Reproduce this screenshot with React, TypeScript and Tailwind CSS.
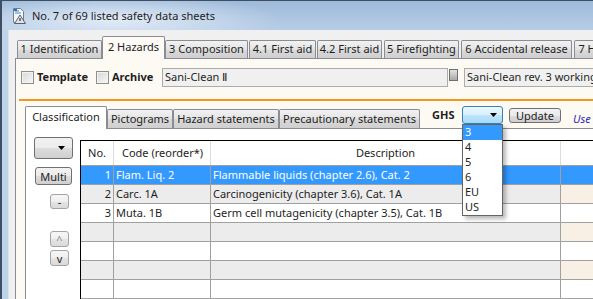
import React from "react";

const outerTabs = [
  { label: "1 Identification", w: "w-[85px]", ml: "" },
  { label: "2 Hazards", w: "w-[63px]", ml: "", active: true },
  { label: "3 Composition", w: "w-[83px]", ml: "" },
  { label: "4.1 First aid", w: "w-[67px]", ml: "ml-[1px]" },
  { label: "4.2 First aid", w: "w-[65px]", ml: "ml-[1px]" },
  { label: "5 Firefighting", w: "w-[75px]", ml: "ml-[2px]" },
  { label: "6 Accidental release", w: "w-[111px]", ml: "ml-[2px]" },
  { label: "7 Handling and storage", w: "w-[130px]", ml: "ml-[2px]" },
];

const innerTabs = [
  { label: "Classification", w: "w-[82px]", active: true },
  { label: "Pictograms", w: "w-[66px]" },
  { label: "Hazard statements", w: "w-[106px]" },
  { label: "Precautionary statements", w: "w-[141px]" },
];

const rows = [
  { no: "1", code: "Flam. Liq. 2", desc: "Flammable liquids (chapter 2.6), Cat. 2" },
  { no: "2", code: "Carc. 1A", desc: "Carcinogenicity (chapter 3.6), Cat. 1A" },
  { no: "3", code: "Muta. 1B", desc: "Germ cell mutagenicity (chapter 3.5), Cat. 1B" },
  { no: "", code: "", desc: "" },
  { no: "", code: "", desc: "" },
  { no: "", code: "", desc: "" },
  { no: "", code: "", desc: "" },
];

const btn =
  "border border-[#707070] rounded-[3px] bg-[linear-gradient(to_bottom,#f2f2f2_0%,#ebebeb_50%,#dddddd_51%,#cfcfcf_100%)] flex items-center justify-center leading-none";
const btnLight =
  "border border-[#a4a4a4] rounded-[3px] bg-[linear-gradient(to_bottom,#f6f6f6_0%,#efefef_50%,#e4e4e4_51%,#dadada_100%)] flex items-center justify-center leading-none";

function Checkbox() {
  return (
    <div className="w-[13px] h-[13px] border border-[#8e8f8f] bg-[linear-gradient(135deg,#d6d6d6,#f8f8f8)] shadow-[inset_0_0_0_1px_#f3f3f3] shrink-0" />
  );
}

function Arrow() {
  return (
    <svg width="7" height="4" viewBox="0 0 7 4">
      <path d="M0 0h7L3.5 4z" fill="#000" />
    </svg>
  );
}

function TitleIcon() {
  return (
    <svg width="15" height="17" viewBox="0 0 15 17">
      <path d="M1.5 1.5h7l3 3v11h-10z" fill="#f4f7fb" stroke="#6d7f95" />
      <path d="M3 4h4M3 6h6" stroke="#4a86c8" strokeWidth="1" />
      <path d="M2 3h3" stroke="#2f6fb8" strokeWidth="2" />
      <path d="M8 8l5.5 8.5h-11z" fill="#dfe3e8" stroke="#56606c" />
      <path d="M8 11v3" stroke="#333" strokeWidth="1.2" />
    </svg>
  );
}

export default function App() {
  return (
    <div className="w-[593px] h-[299px] overflow-hidden flex flex-col border-l-2 border-t border-[#3f4f63] bg-[#bcd3ea] font-['Noto_Sans',sans-serif] text-[11px] text-[#1e1e1e]">
      {/* title bar */}
      <div className="h-[29px] shrink-0 flex items-center pl-[10px] bg-[radial-gradient(ellipse_170px_26px_at_110px_19px,rgba(228,237,248,0.95),rgba(228,237,248,0)),linear-gradient(to_bottom,#9dbad9,#b7cde6)]">
        <TitleIcon />
        <span className="ml-[5px] text-[11px] text-[#1e1e1e] mt-[1px]">
          No. 7 of 69 listed safety data sheets
        </span>
      </div>

      <div className="flex flex-1 min-h-0">
        <div className="w-[7px] shrink-0 bg-[#bcd3ea] border-r border-[#d9e4ef]" />

        {/* client */}
        <div className="flex-1 min-w-0 bg-[#f0f0f0] pl-[6px] pt-[6px] flex flex-col">
          <div className="h-[22px] flex items-end pl-[2px] shrink-0">
            {outerTabs.map((t) =>
              t.active ? (
                <div
                  key={t.label}
                  className={`${t.w} ${t.ml} h-[23px] mb-[-1px] relative z-10 shrink-0 border border-b-0 border-[#898c95] rounded-t-[2px] bg-[#fdfaf6] flex items-start justify-center pt-[2px] whitespace-nowrap`}
                >
                  {t.label}
                </div>
              ) : (
                <div
                  key={t.label}
                  className={`${t.w} ${t.ml} h-[18px] shrink-0 border border-b-0 border-[#898c95] rounded-t-[2px] bg-[linear-gradient(to_bottom,#f2f2f2,#e3e3e3_50%,#dadada_51%,#cfcfcf)] flex items-center justify-center whitespace-nowrap overflow-hidden`}
                >
                  {t.label}
                </div>
              )
            )}
          </div>

          {/* outer panel */}
          <div className="flex-1 min-h-0 border-t border-l border-[#898c95] bg-[#fdf9f3] pt-[9px] flex flex-col">
            <div className="h-[19px] flex items-center pl-[5px] shrink-0">
              <div className="w-[75px] flex items-center shrink-0">
                <Checkbox />
                <span className="ml-[3px] font-bold">Template</span>
              </div>
              <div className="w-[66px] flex items-center shrink-0">
                <Checkbox />
                <span className="ml-[3px] font-bold">Archive</span>
              </div>
              <div className="w-[286px] h-[19px] shrink-0 border border-[#acacac] bg-[#f0f0f0] flex items-center pl-[2px]">
                Sani-Clean Ⅱ
              </div>
              <div className="ml-[1px] w-[9px] h-[12px] self-start mt-[1px] shrink-0 border border-[#6f6f6f] bg-[linear-gradient(to_bottom,#e2e2e2,#a9a9a9)]" />
              <div className="ml-[6px] w-[200px] h-[19px] shrink-0 border border-[#acacac] bg-[#f0f0f0] flex items-center pl-[2px] whitespace-nowrap overflow-hidden">
                Sani-Clean rev. 3 working copy
              </div>
            </div>

            <div className="ml-[3px] mt-[12px] h-[2px] bg-[#f7941d] shrink-0" />

            {/* inner tabs */}
            <div className="ml-[9px] mt-[5px] h-[22px] flex items-start shrink-0">
              {innerTabs.map((t) =>
                t.active ? (
                  <div
                    key={t.label}
                    className={`${t.w} h-[23px] relative z-10 shrink-0 border border-b-0 border-[#898c95] rounded-t-[2px] bg-white flex items-start justify-center pt-[2px] whitespace-nowrap`}
                  >
                    {t.label}
                  </div>
                ) : (
                  <div
                    key={t.label}
                    className={`${t.w} mt-[3px] h-[19px] shrink-0 border border-b-0 border-[#898c95] rounded-t-[2px] bg-[linear-gradient(to_bottom,#f2f2f2,#e3e3e3_50%,#dadada_51%,#cfcfcf)] flex items-center justify-center whitespace-nowrap`}
                  >
                    {t.label}
                  </div>
                )
              )}
              <div className="ml-[12px] w-[25px] h-[18px] flex items-center font-bold shrink-0">GHS</div>
              <div className="ml-[5px] relative z-20 shrink-0">
                <div className="w-[41px] h-[18px] border border-[#3c7fb1] rounded-[3px] bg-[linear-gradient(to_bottom,#eaf6fd,#d9f0fc_50%,#bee6fd_51%,#a7d9f5)] flex items-center justify-end pr-[5px]">
                  <Arrow />
                </div>
                <div className="absolute top-full left-0 w-[41px] border border-[#646464] bg-white shadow-[3px_3px_4px_rgba(0,0,0,0.28)]">
                  {["3", "4", "5", "6", "EU", "US"].map((o, i) => (
                    <div
                      key={o}
                      className={`h-[15px] pl-[2px] flex items-center ${i === 0 ? "bg-[#3399ff] text-white" : ""}`}
                    >
                      {o}
                    </div>
                  ))}
                </div>
              </div>
              <div className={`${btn} ml-[6px] mt-[2px] w-[52px] h-[15px] shrink-0`}>Update</div>
              <div className="ml-[12px] mt-[5px] italic text-[#2b2bb8] whitespace-nowrap">Use the</div>
            </div>

            {/* inner panel */}
            <div className="ml-[9px] flex-1 min-h-0 border-t border-l border-[#898c95] bg-white flex">
              <div className="w-[54px] shrink-0 flex flex-col items-start">
                <div className={`${btn} ml-[8px] mt-[8px] w-[39px] h-[22px] !justify-end pr-[7px]`}>
                  <Arrow />
                </div>
                <div className={`${btn} ml-[9px] mt-[8px] w-[37px] h-[18px]`}>Multi</div>
                <div className={`${btnLight} ml-[24px] mt-[9px] w-[19px] h-[15px]`}>-</div>
                <div className={`${btnLight} ml-[24px] mt-[22px] w-[19px] h-[16px] text-[#8a8a8a]`}>^</div>
                <div className={`${btnLight} ml-[24px] mt-[3px] w-[19px] h-[16px]`}>v</div>
              </div>

              {/* table */}
              <div className="flex-1 min-w-0 mt-[11px] border-t border-l border-black flex flex-col">
                <div className="h-[25px] shrink-0 flex border-b border-[#a0a0a0] bg-white">
                  <div className="w-[33px] shrink-0 border-r border-[#dcdcdc] flex items-center justify-center">No.</div>
                  <div className="w-[97px] shrink-0 border-r border-[#dcdcdc] flex items-center pl-[8px] whitespace-nowrap">
                    Code (reorder*)
                  </div>
                  <div className="w-[350px] shrink-0 border-r border-[#dcdcdc] flex items-center justify-center">
                    Description
                  </div>
                  <div className="flex-1" />
                </div>
                {rows.map((r, i) => {
                  const selected = i === 0;
                  const gray = i % 2 === 1;
                  const bg = selected ? "bg-[#3399ff] text-white" : gray ? "bg-[#ececec]" : "bg-white";
                  const last = selected ? "bg-[#3399ff]" : gray ? "bg-[#f8efe5]" : "bg-white";
                  return (
                    <div key={i} className={`h-[19px] shrink-0 flex border-b border-[#a0a0a0] ${bg}`}>
                      <div className="w-[33px] shrink-0 border-r border-[#a0a0a0] flex items-center justify-end pr-[2px]">
                        {r.no}
                      </div>
                      <div className="w-[97px] shrink-0 border-r border-[#a0a0a0] flex items-center pl-[2px] whitespace-nowrap">
                        {r.code}
                      </div>
                      <div className="w-[350px] shrink-0 border-r border-[#a0a0a0] flex items-center pl-[2px] whitespace-nowrap">
                        {r.desc}
                      </div>
                      <div className={`flex-1 ${last}`} />
                    </div>
                  );
                })}
              </div>
            </div>
          </div>
        </div>
      </div>
    </div>
  );
}
